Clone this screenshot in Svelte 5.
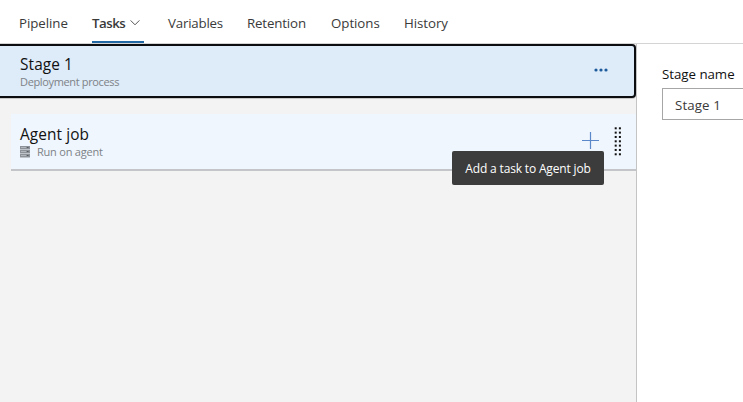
<script>
  const tabs = [
    { label: 'Pipeline', width: 73, spacing: -0.05 },
    { label: 'Tasks', width: 76, active: true, spacing: -0.5 },
    { label: 'Variables', width: 79, spacing: -0.2 },
    { label: 'Retention', width: 84, spacing: -0.15 },
    { label: 'Options', width: 73, spacing: -0.05 },
    { label: 'History', width: 60, spacing: -0.05 }
  ];
  const gripRows = [0, 1, 2, 3, 4, 5, 6];
</script>

<div class="app">
  <nav>
    {#each tabs as tab}
      <div class="slot" style="width: {tab.width}px">
        <div class="tab" class:active={tab.active}>
          <span style="letter-spacing: {tab.spacing}px">{tab.label}</span>
          {#if tab.active}
            <svg width="10" height="7" viewBox="0 0 10 7"><path d="M.6 1.4 5 5.8 9.4 1.4" fill="none" stroke="#555" stroke-width="1" /></svg>
          {/if}
        </div>
      </div>
    {/each}
  </nav>
  <main>
    <section class="left">
      <div class="stage">
        <div class="texts">
          <div class="title">Stage 1</div>
          <div class="sub process">Deployment process</div>
        </div>
        <svg class="more" width="14" height="4" viewBox="0 0 14 4" fill="#1d5b9c"><circle cx="2" cy="2" r="1.6" /><circle cx="7" cy="2" r="1.6" /><circle cx="12" cy="2" r="1.6" /></svg>
      </div>
      <div class="job">
        <div class="texts">
          <div class="title">Agent job</div>
          <div class="sub">
            <svg width="10" height="12" viewBox="0 0 10 12"><path d="M0 0h10v3.4H0zM0 4h10v3.4H0zM0 8h10v3.4H0z" fill="#8d9298" /><path d="M1 1.5h5M1 5.5h5M1 9.5h5" stroke="#b0b6bc" /><path d="M7 1.5h1.5M7 5.5h1.5M7 9.5h1.5" stroke="#555b62" /></svg>
            <span>Run on agent</span>
          </div>
        </div>
        <svg class="plus" width="17" height="17" viewBox="0 0 17 17"><path d="M8.5 0v17M0 8.5h17" stroke="#5b88c8" stroke-width="1.2" /></svg>
        <svg class="grip" width="8" height="29" viewBox="0 0 8 29" fill="#111">
          {#each gripRows as row}
            <rect x="0.7" y={row * 4.33 + 0.3} width="2" height="2" />
            <rect x="4.9" y={row * 4.33 + 0.3} width="2" height="2" />
          {/each}
        </svg>
        <div class="tooltip"><span>Add a task to Agent job</span></div>
      </div>
    </section>
    <section class="right">
      <div class="label">Stage name</div>
      <div class="input"><span>Stage 1</span></div>
    </section>
  </main>
</div>

<style>
  :global(body) { margin: 0; overflow: hidden; }
  .app { box-sizing: border-box; width: 743px; height: 402px; display: flex; flex-direction: column; overflow: hidden; background: #fff; font-family: "Open Sans", "Noto Sans", sans-serif; font-size: 13.3px; color: #3a3a3a; white-space: nowrap; }
  nav { display: flex; height: 43px; padding-left: 19px; border-bottom: 1px solid #d4d4d4; flex: none; }
  .slot { flex: none; display: flex; }
  .tab { box-sizing: border-box; display: flex; align-items: center; height: 43px; padding-top: 4px; border-bottom: 2px solid transparent; }
  .active { width: 52px; justify-content: space-between; padding-right: 4px; border-bottom-color: #2268a5; font-weight: 600; }
  main { flex: 1; display: flex; }
  .left { width: 636px; flex: none; background: #f3f3f3; border-right: 1px solid #c4c4c4; }
  .stage { box-sizing: border-box; display: flex; height: 54px; border: 2px solid #0b0d10; border-left: 0; border-radius: 0 4px 4px 0; background: #deebf8; box-shadow: 0 1px #c8c8c8; padding-left: 20px; }
  .texts { flex: 1; }
  .title { color: #111; font-size: 15.4px; line-height: 22px; margin-bottom: -2px; letter-spacing: 0.1px; }
  .stage .texts { padding-top: 8px; }
  .sub { display: flex; align-items: center; font-size: 11px; line-height: 15px; color: #7d8287; letter-spacing: -0.22px; }
  .process { letter-spacing: -0.35px; }
  .more { margin: 22px 26px 0 0; }
  .job { position: relative; box-sizing: border-box; display: flex; height: 57px; margin: 16px 0 0 11px; padding-left: 9px; background: #eff6fd; border-bottom: 2px solid #c4c5c8; }
  .job .texts { padding-top: 10px; }
  .sub svg { margin-right: 7px; }
  .plus { margin: 18px 15px 0 0; }
  .grip { margin: 13px 14px 0 0; }
  .tooltip { position: absolute; left: 441px; top: 37px; width: 152px; height: 34px; border-radius: 2px; background: #3c3c3c; color: #fff; display: flex; align-items: center; justify-content: center; font-size: 12px; font-weight: 500; letter-spacing: -0.16px; }
  .right { flex: 1; padding: 20px 0 0 25px; }
  .label { color: #111; line-height: 20px; letter-spacing: -0.03px; }
  .input { box-sizing: border-box; height: 32px; width: 100px; margin-top: 4px; border: 1px solid #a6a6a6; padding: 1px 0 0 12px; display: flex; align-items: center; letter-spacing: 0.1px; }
</style>
